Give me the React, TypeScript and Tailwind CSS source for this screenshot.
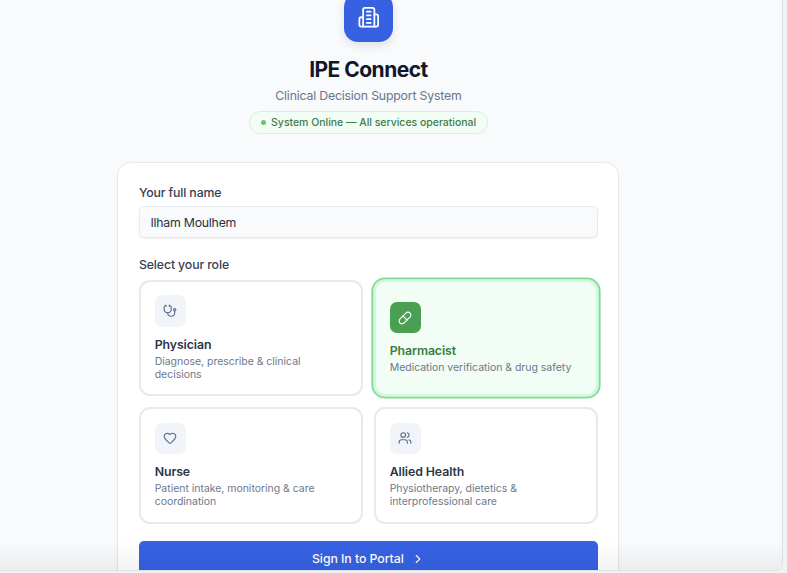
import { ChevronRight, Heart, Pill, Stethoscope, Users } from "lucide-react";
import type { LucideIcon } from "lucide-react";

interface Role {
  id: string;
  name: string;
  description: string;
  icon: LucideIcon;
}

const ROLES: Role[] = [
  { id: "physician", name: "Physician", description: "Diagnose, prescribe & clinical decisions", icon: Stethoscope },
  { id: "pharmacist", name: "Pharmacist", description: "Medication verification & drug safety", icon: Pill },
  { id: "nurse", name: "Nurse", description: "Patient intake, monitoring & care coordination", icon: Heart },
  { id: "allied", name: "Allied Health", description: "Physiotherapy, dietetics & interprofessional care", icon: Users },
];

function HospitalIcon() {
  return (
    <svg
      className="w-[22.5px] h-[22.5px] translate-x-[0.5px]"
      viewBox="0 0 24 24"
      fill="none"
      stroke="currentColor"
      strokeWidth="1.9"
      strokeLinecap="round"
      strokeLinejoin="round"
    >
      <path d="M6 22V4a2 2 0 0 1 2-2h8a2 2 0 0 1 2 2v18Z" />
      <path d="M6 12H4a2 2 0 0 0-2 2v6a2 2 0 0 0 2 2h2" />
      <path d="M18 9h2a2 2 0 0 1 2 2v9a2 2 0 0 1-2 2h-2" />
      <path d="M10 6h4M10 10h4M10 14h4M10 18h4" />
    </svg>
  );
}

function RoleCard({ role, selected }: { role: Role; selected: boolean }) {
  const Icon = role.icon;
  return (
    <button
      className={`h-[116.5px] px-[13.8px] flex flex-col items-start justify-center text-left rounded-[11px] border-2 ${
        selected
          ? "bg-[#f2fdf5] border-[#d3f9dd] shadow-[0_0_0_1px_#bdf3ca,0_0_0_2.6px_#83d998]"
          : "bg-white border-[#e7e9ee]"
      }`}
    >
      <span
        className={`w-[31.5px] h-[31.5px] mb-[9px] flex items-center justify-center rounded-[7px] ${
          selected ? "bg-[#4b9f52] text-white" : "bg-[#f1f5f9] text-[#64708a]"
        }`}
      >
        <Icon className="w-[14px] h-[14px]" strokeWidth={2} />
      </span>
      <span
        className={`text-[12.3px] leading-[17px] font-semibold tracking-[-0.08px] ${
          selected ? "text-[#3a7d41]" : "text-[#2b3548]"
        }`}
      >
        {role.name}
      </span>
      <span className="mt-[2px] text-[10.5px] leading-[13px] tracking-[-0.03px] text-[#6d788c]">
        {role.description}
      </span>
    </button>
  );
}

export default function App() {
  return (
    <div className="w-[787px] h-[573px] overflow-hidden bg-[#f1f2f4] font-['Inter',sans-serif]">
      <div className="relative w-[783px] h-[571px] overflow-hidden rounded-br-[7px] border-r border-b border-[#dfe1e6] bg-[#f8fafc]">
        <div className="w-[502px] ml-[117.4px] flex flex-col items-center">
          {/* Brand header */}
          <div className="w-[49px] h-[49px] -mt-[7.5px] flex items-center justify-center rounded-[14px] bg-[#3661e2] text-white shadow-[0_4px_8px_rgba(30,41,59,0.11)]">
            <HospitalIcon />
          </div>
          <h1 className="mt-[14.4px] text-[21px] leading-[28px] font-bold tracking-[-0.53px] text-[#111728]">IPE Connect</h1>
          <p className="mt-[3.1px] text-[12.3px] leading-[17px] tracking-[-0.19px] text-[#6b758b]">
            Clinical Decision Support System
          </p>
          <div className="mt-[7px] h-[23px] px-[10.5px] flex items-center gap-[5.5px] rounded-full border border-[#cdf5d8] bg-[#f2fdf5]">
            <span className="w-[5px] h-[5px] rounded-full bg-[#62c578]" />
            <span className="text-[10.5px] font-medium tracking-[-0.02px] text-[#427c4a]">
              System Online — All services operational
            </span>
          </div>

          {/* Sign-in card */}
          <div className="mt-[28px] w-full h-[460px] px-[20.5px] pt-[20.6px] rounded-[14px] border border-[#e6eaf0] bg-white shadow-[0_1px_3px_rgba(15,23,42,0.04)]">
            <label className="block text-[12.3px] leading-[18px] font-medium tracking-[-0.14px] text-[#364154]">
              Your full name
            </label>
            <input
              className="mt-[4.6px] block w-full h-[32px] px-[10.5px] rounded-[5px] border border-[#e6eaf0] bg-[#f8fafc] text-[12.3px] tracking-[-0.22px] text-[#273142] shadow-[0_1px_2px_rgba(0,0,0,0.05)] outline-none"
              defaultValue="Ilham Moulhem"
            />
            <div className="mt-[17.4px] text-[12.3px] leading-[18px] font-medium tracking-[-0.12px] text-[#364154]">
              Select your role
            </div>
            <div className="mt-[6.2px] grid grid-cols-2 gap-x-[11px] gap-y-[10.8px]">
              {ROLES.map((role) => (
                <RoleCard key={role.id} role={role} selected={role.id === "pharmacist"} />
              ))}
            </div>
            <button className="mt-[17.6px] w-full h-[36px] flex items-center justify-center gap-[7px] rounded-[5px] bg-[#3661e2] text-[12.3px] font-medium tracking-[-0.05px] text-white">
              Sign In to Portal
              <ChevronRight className="w-[14px] h-[14px]" strokeWidth={2} />
            </button>
          </div>
        </div>
        {/* Scroll track and bottom fade */}
        <div className="absolute right-0 top-0 w-[3px] h-full bg-[#f6f8fd]" />
        <div className="absolute inset-x-0 bottom-0 h-[30px] pointer-events-none bg-linear-to-b from-transparent to-black/5" />
      </div>
    </div>
  );
}
